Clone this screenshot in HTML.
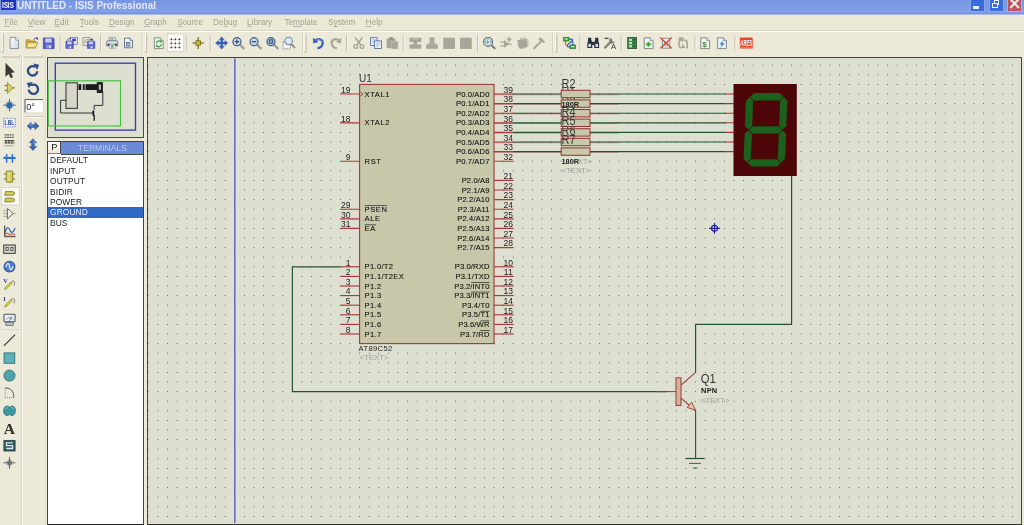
<!DOCTYPE html>
<html><head><meta charset="utf-8"><title>UNTITLED - ISIS Professional</title>
<style>
html,body{margin:0;padding:0;}
body{width:1024px;height:525px;overflow:hidden;background:#ece9d8;position:relative;font-family:"Liberation Sans",sans-serif;}
.abs{position:absolute;}
#title{left:0;top:0;width:1024px;height:15px;border-bottom:1px solid #a8bae0;box-sizing:border-box;background:linear-gradient(#7696e2,#7b9ae4 45%,#86a3e8);}
#title .t{left:17px;top:-1.3px;color:#e2e9fb;font-weight:bold;font-size:10.4px;white-space:nowrap;line-height:14px;transform:scaleX(0.955);transform-origin:0 0;}
#menu{left:0;top:14px;width:1024px;height:16px;}
#menu span{position:absolute;top:3.4px;font-size:8.9px;color:#a3a194;line-height:11px;white-space:nowrap;transform:scaleX(0.92);transform-origin:50% 50%;}
#menu u{text-decoration-thickness:0.7px;text-underline-offset:1px;text-decoration-color:#b5b3a6;}
.tb{top:-1px;width:15.2px;height:13.2px;margin-left:-0.3px;background:#3a6ce0;border:1px solid #8aa6ee;box-sizing:border-box;}
.hl{background:#fff;height:1px;}
.sh{background:#aca899;height:1px;}
.lst{position:absolute;left:49.6px;font-size:9.2px;line-height:10.4px;color:#222;white-space:nowrap;transform:scaleX(0.915);transform-origin:0 0;letter-spacing:0.1px;}
svg text{font-family:"Liberation Sans",sans-serif;}
.pt{stroke:#0c0c0c;stroke-width:0.07px;}
#root{position:absolute;left:0;top:0;width:1024px;height:525px;overflow:hidden;will-change:transform;}
</style></head><body><div id="root">
<div id="title" class="abs"><div class="abs" style="left:1px;top:0;width:14.5px;height:10.4px;background:#2432c2;"></div>
<div class="abs" style="left:1.8px;top:0.2px;font-size:8.8px;line-height:10px;font-weight:bold;color:#f4f6ff;letter-spacing:-0.2px;transform:scaleX(0.74);transform-origin:0 0;">ISIS</div>
<div class="abs t">UNTITLED - ISIS Professional</div>
<div class="abs" style="left:0;top:12px;width:1024px;height:2px;background:linear-gradient(#7f9de6,#7691dc);"></div>
<div class="abs tb" style="left:970px;"></div><div class="abs" style="left:973px;top:6.4px;width:6px;height:2.2px;background:#e8eefc;"></div>
<div class="abs tb" style="left:989px;"></div>
<div class="abs" style="left:994px;top:0.4px;width:5.4px;height:4.6px;border:1.2px solid #e8eefc;border-top-width:1.8px;box-sizing:border-box;"></div>
<div class="abs" style="left:991.8px;top:2.6px;width:6.2px;height:5.2px;border:1.2px solid #f4f7ff;border-top-width:1.8px;box-sizing:border-box;background:#3a6ce0;"></div>
<div class="abs tb" style="left:1007.6px;background:#c2525e;border-color:#d9a0b0;"></div>
<svg class="abs" style="left:1008px;top:0" width="14" height="12" viewBox="0 0 14 12"><path d="M2.2 -1 L11 8 M11 -1 L2.2 8" stroke="#fbeef0" stroke-width="1.9" fill="none"/></svg>
</div>
<div id="menu" class="abs">
<span style="left:4px"><u>F</u>ile</span><span style="left:26.5px"><u>V</u>iew</span><span style="left:54px"><u>E</u>dit</span><span style="left:78.5px"><u>T</u>ools</span><span style="left:107.5px"><u>D</u>esign</span><span style="left:143px"><u>G</u>raph</span><span style="left:175.5px"><u>S</u>ource</span><span style="left:211.5px">De<u>b</u>ug</span><span style="left:245.5px"><u>L</u>ibrary</span><span style="left:282.5px">Te<u>m</u>plate</span><span style="left:327px">S<u>y</u>stem</span><span style="left:364.5px"><u>H</u>elp</span>
</div>
<div class="abs sh" style="left:0;top:30px;width:1024px;opacity:.3"></div>
<div class="abs hl" style="left:0;top:31px;width:1024px;"></div>
<svg class="abs" style="left:0;top:0" width="1024" height="58" viewBox="0 0 1024 58">
<rect x="167.2" y="34" width="16.6" height="17.4" fill="#fbfaf4" stroke="#c9c6b6" stroke-width="0.6"/>
<line x1="60.2" y1="35" x2="60.2" y2="51.5" stroke="#bcb9a9" stroke-width="1"/><line x1="61.1" y1="35" x2="61.1" y2="51.5" stroke="#faf9f2" stroke-width="0.8"/>
<line x1="100.5" y1="35" x2="100.5" y2="51.5" stroke="#bcb9a9" stroke-width="1"/><line x1="101.4" y1="35" x2="101.4" y2="51.5" stroke="#faf9f2" stroke-width="0.8"/>
<line x1="186.9" y1="35" x2="186.9" y2="51.5" stroke="#bcb9a9" stroke-width="1"/><line x1="187.8" y1="35" x2="187.8" y2="51.5" stroke="#faf9f2" stroke-width="0.8"/>
<line x1="210.3" y1="35" x2="210.3" y2="51.5" stroke="#bcb9a9" stroke-width="1"/><line x1="211.20000000000002" y1="35" x2="211.20000000000002" y2="51.5" stroke="#faf9f2" stroke-width="0.8"/>
<line x1="346.6" y1="35" x2="346.6" y2="51.5" stroke="#bcb9a9" stroke-width="1"/><line x1="347.5" y1="35" x2="347.5" y2="51.5" stroke="#faf9f2" stroke-width="0.8"/>
<line x1="403.3" y1="35" x2="403.3" y2="51.5" stroke="#bcb9a9" stroke-width="1"/><line x1="404.2" y1="35" x2="404.2" y2="51.5" stroke="#faf9f2" stroke-width="0.8"/>
<line x1="477.5" y1="35" x2="477.5" y2="51.5" stroke="#bcb9a9" stroke-width="1"/><line x1="478.4" y1="35" x2="478.4" y2="51.5" stroke="#faf9f2" stroke-width="0.8"/>
<line x1="580.0" y1="35" x2="580.0" y2="51.5" stroke="#bcb9a9" stroke-width="1"/><line x1="580.9" y1="35" x2="580.9" y2="51.5" stroke="#faf9f2" stroke-width="0.8"/>
<line x1="621.3" y1="35" x2="621.3" y2="51.5" stroke="#bcb9a9" stroke-width="1"/><line x1="622.1999999999999" y1="35" x2="622.1999999999999" y2="51.5" stroke="#faf9f2" stroke-width="0.8"/>
<line x1="695.0" y1="35" x2="695.0" y2="51.5" stroke="#bcb9a9" stroke-width="1"/><line x1="695.9" y1="35" x2="695.9" y2="51.5" stroke="#faf9f2" stroke-width="0.8"/>
<line x1="735.0" y1="35" x2="735.0" y2="51.5" stroke="#bcb9a9" stroke-width="1"/><line x1="735.9" y1="35" x2="735.9" y2="51.5" stroke="#faf9f2" stroke-width="0.8"/>
<path d="M2.4 33.6 V52" stroke="#fbfaf4" stroke-width="1" fill="none"/><path d="M3.4 33.6 V52.2 H1.4" stroke="#b5b2a2" stroke-width="0.9" fill="none"/>
<path d="M145.70000000000002 33.6 V52" stroke="#fbfaf4" stroke-width="1" fill="none"/><path d="M146.70000000000002 33.6 V52.2 H144.70000000000002" stroke="#b5b2a2" stroke-width="0.9" fill="none"/>
<path d="M305.0 33.6 V52" stroke="#fbfaf4" stroke-width="1" fill="none"/><path d="M306.0 33.6 V52.2 H304.0" stroke="#b5b2a2" stroke-width="0.9" fill="none"/>
<path d="M555.8 33.6 V52" stroke="#fbfaf4" stroke-width="1" fill="none"/><path d="M556.8 33.6 V52.2 H554.8" stroke="#b5b2a2" stroke-width="0.9" fill="none"/>
<line x1="142.2" y1="32" x2="142.2" y2="54.5" stroke="#d4d1c1" stroke-width="1"/><line x1="143.1" y1="32" x2="143.1" y2="54.5" stroke="#f8f7ef" stroke-width="0.8"/>
<line x1="302.5" y1="32" x2="302.5" y2="54.5" stroke="#d4d1c1" stroke-width="1"/><line x1="303.4" y1="32" x2="303.4" y2="54.5" stroke="#f8f7ef" stroke-width="0.8"/>
<line x1="552.5" y1="32" x2="552.5" y2="54.5" stroke="#d4d1c1" stroke-width="1"/><line x1="553.4" y1="32" x2="553.4" y2="54.5" stroke="#f8f7ef" stroke-width="0.8"/>
<g transform="translate(8.10,36.6) scale(0.8)"><defs><linearGradient id="pg" x1="0" y1="0" x2="1" y2="1"><stop offset="0" stop-color="#ffffff"/><stop offset="1" stop-color="#cfd6e2"/></linearGradient></defs><path d="M2.5 1 H9.5 L13 4.5 V15 H2.5 Z" fill="url(#pg)" stroke="#7b8694" stroke-width="1.1"/><path d="M9.5 1 V4.5 H13" fill="#e8ecf3" stroke="#7b8694" stroke-width="0.9"/></g>
<g transform="translate(25.40,36.6) scale(0.8)"><path d="M1 4 H5.5 L7 5.5 H12.5 V8 H1 Z" fill="#e9c85a" stroke="#9c7f22" stroke-width="0.9"/><path d="M1 14 V6 H12.5 V14 Z" fill="#e9c85a" stroke="#9c7f22" stroke-width="0.9"/><path d="M0.8 14 L3.6 7.6 H15.6 L12.6 14 Z" fill="#f6e58f" stroke="#9c7f22" stroke-width="0.9"/><path d="M10.5 4 C11 1.5 13.5 1 15 2.2" fill="none" stroke="#3b4a9c" stroke-width="1.2"/><path d="M15.8 0.4 L15.8 3.8 L12.8 3 Z" fill="#3b4a9c"/></g>
<g transform="translate(42.40,36.6) scale(0.8)"><g transform="translate(1.2,1.6) scale(1.12)"><path d="M0 0 H11 L12 1 V12 H0 Z" fill="#565fc6" stroke="#3d45a8" stroke-width="0.8"/><rect x="2.2" y="0.6" width="7" height="4.6" fill="#c9cdf2"/><rect x="3" y="7.6" width="6" height="4.2" fill="#8a90dc"/><rect x="6.6" y="8.4" width="1.6" height="2.8" fill="#f0f0ff"/></g></g>
<g transform="translate(65.40,36.6) scale(0.8)"><rect x="6.5" y="1" width="8.5" height="9" fill="#d9def3" stroke="#6a73b4" stroke-width="0.9"/><rect x="8.6" y="2.6" width="4.4" height="3" fill="#3a3f9a"/><g transform="translate(0.6,5.6) scale(0.78)"><path d="M0 0 H11 L12 1 V12 H0 Z" fill="#565fc6" stroke="#3d45a8" stroke-width="0.8"/><rect x="2.2" y="0.6" width="7" height="4.6" fill="#c9cdf2"/><rect x="3" y="7.6" width="6" height="4.2" fill="#8a90dc"/><rect x="6.6" y="8.4" width="1.6" height="2.8" fill="#f0f0ff"/></g><path d="M3 5 C3 2.5 5 1.6 7 2" fill="none" stroke="#394090" stroke-width="1.1"/></g>
<g transform="translate(82.40,36.6) scale(0.8)"><rect x="0.8" y="1.2" width="8.5" height="10" fill="#e4e3dc" stroke="#8b897c" stroke-width="0.9"/><path d="M3 8 C3 4 6 3 8 4" fill="none" stroke="#8b897c" stroke-width="1"/><g transform="translate(6.2,5.6) scale(0.78)"><path d="M0 0 H11 L12 1 V12 H0 Z" fill="#565fc6" stroke="#3d45a8" stroke-width="0.8"/><rect x="2.2" y="0.6" width="7" height="4.6" fill="#c9cdf2"/><rect x="3" y="7.6" width="6" height="4.2" fill="#8a90dc"/><rect x="6.6" y="8.4" width="1.6" height="2.8" fill="#f0f0ff"/></g><path d="M9.2 3.6 L13 2 L12.6 5.6 Z" fill="#2a2f7a"/></g>
<g transform="translate(105.80,36.6) scale(0.8)"><rect x="4.2" y="0.8" width="7.6" height="5" fill="#f2f4f6" stroke="#7d8894" stroke-width="0.9"/><rect x="6" y="2" width="3.6" height="3" fill="#7cc47c"/><path d="M1 6.6 Q1 5 2.6 5 H13.4 Q15 5 15 6.6 V11.6 H1 Z" fill="#cfd6e0" stroke="#5d6876" stroke-width="0.9"/><rect x="2.2" y="9" width="3" height="2.4" fill="#2e3540"/><rect x="10.8" y="9" width="3" height="2.4" fill="#2e3540"/><rect x="4.4" y="10.2" width="7.2" height="4.6" fill="#f4f6f8" stroke="#8c96a2" stroke-width="0.8"/><rect x="6.4" y="10.4" width="3.2" height="3.6" fill="#63b563"/></g>
<g transform="translate(122.10,36.6) scale(0.8)"><path d="M3 2 H10 L13 5 V14 H3 Z" fill="#f2f4f9" stroke="#4b5d7c" stroke-width="1"/><path d="M10 2 V5 H13" fill="#dfe4ec" stroke="#4b5d7c" stroke-width="0.8"/><rect x="5.2" y="7.4" width="4.6" height="4.6" fill="#a8b4c8" stroke="#55678a" stroke-width="0.9"/></g>
<g transform="translate(152.40,36.6) scale(0.8)"><path d="M2.5 1.5 H10.0 L13.5 5.0 V15.0 H2.5 Z" fill="#eef3ea" stroke="#6d7a70" stroke-width="1"/><path d="M10.0 1.5 V5.0 H13.5" fill="#dfe4ec" stroke="#6d7a70" stroke-width="0.8"/><path d="M5 8.6 A3.2 3.2 0 0 1 10.6 6.4" fill="none" stroke="#3fa04a" stroke-width="1.6"/><path d="M11.8 4.6 L11.4 8 L8.6 6.4 Z" fill="#3fa04a"/><path d="M11 9.4 A3.2 3.2 0 0 1 5.4 11.6" fill="none" stroke="#3fa04a" stroke-width="1.6"/><path d="M4.2 13.4 L4.6 10 L7.4 11.6 Z" fill="#3fa04a"/></g>
<g transform="translate(169.00,36.6) scale(0.8)"><line x1="1" y1="3.5" x2="15" y2="3.5" stroke="#8a8a84" stroke-width="0.8" stroke-dasharray="1 1.2"/><line x1="3" y1="1.5" x2="3" y2="15.5" stroke="#8a8a84" stroke-width="0.8" stroke-dasharray="1 1.2"/><line x1="1" y1="8.5" x2="15" y2="8.5" stroke="#8a8a84" stroke-width="0.8" stroke-dasharray="1 1.2"/><line x1="8" y1="1.5" x2="8" y2="15.5" stroke="#8a8a84" stroke-width="0.8" stroke-dasharray="1 1.2"/><line x1="1" y1="13.5" x2="15" y2="13.5" stroke="#8a8a84" stroke-width="0.8" stroke-dasharray="1 1.2"/><line x1="13" y1="1.5" x2="13" y2="15.5" stroke="#8a8a84" stroke-width="0.8" stroke-dasharray="1 1.2"/><rect x="2.1" y="2.6" width="1.8" height="1.8" fill="#333"/><rect x="2.1" y="7.6" width="1.8" height="1.8" fill="#333"/><rect x="2.1" y="12.6" width="1.8" height="1.8" fill="#333"/><rect x="7.1" y="2.6" width="1.8" height="1.8" fill="#333"/><rect x="7.1" y="7.6" width="1.8" height="1.8" fill="#333"/><rect x="7.1" y="12.6" width="1.8" height="1.8" fill="#333"/><rect x="12.1" y="2.6" width="1.8" height="1.8" fill="#333"/><rect x="12.1" y="7.6" width="1.8" height="1.8" fill="#333"/><rect x="12.1" y="12.6" width="1.8" height="1.8" fill="#333"/></g>
<g transform="translate(191.80,36.6) scale(0.8)"><line x1="1" y1="8" x2="15" y2="8" stroke="#77751a" stroke-width="1.6"/><line x1="8" y1="0.5" x2="8" y2="15.5" stroke="#77751a" stroke-width="1.6"/><rect x="5.2" y="5.2" width="5.6" height="5.6" fill="#bdb94a" stroke="#6a6815" stroke-width="1"/></g>
<g transform="translate(215.30,36.6) scale(0.8)"><g fill="#2f63c4" stroke="#1f4696" stroke-width="0.4"><path d="M8 0.2 L11.2 4 H9.2 V6.8 H12 V4.8 L15.8 8 L12 11.2 V9.2 H9.2 V12 H11.2 L8 15.8 L4.8 12 H6.8 V9.2 H4 V11.2 L0.2 8 L4 4.8 V6.8 H6.8 V4 H4.8 Z"/></g></g>
<g transform="translate(231.90,36.6) scale(0.8)"><line x1="9.6" y1="9.6" x2="14.6" y2="14.6" stroke="#8b8b86" stroke-width="2.6" stroke-linecap="round"/><line x1="9.8" y1="9.8" x2="14.4" y2="14.4" stroke="#b9b9b2" stroke-width="1" stroke-linecap="round"/><circle cx="6.3" cy="6.3" r="5" fill="#c5d6ea" stroke="#3f5f88" stroke-width="1.5"/><path d="M3.6 6.3 H9 M6.3 3.6 V9" stroke="#2c4770" stroke-width="1.5" fill="none"/></g>
<g transform="translate(249.00,36.6) scale(0.8)"><line x1="9.6" y1="9.6" x2="14.6" y2="14.6" stroke="#8b8b86" stroke-width="2.6" stroke-linecap="round"/><line x1="9.8" y1="9.8" x2="14.4" y2="14.4" stroke="#b9b9b2" stroke-width="1" stroke-linecap="round"/><circle cx="6.3" cy="6.3" r="5" fill="#c5d6ea" stroke="#3f5f88" stroke-width="1.5"/><path d="M3.6 6.3 H9" stroke="#2c4770" stroke-width="1.5" fill="none"/></g>
<g transform="translate(265.90,36.6) scale(0.8)"><line x1="9.6" y1="9.6" x2="14.6" y2="14.6" stroke="#8b8b86" stroke-width="2.6" stroke-linecap="round"/><line x1="9.8" y1="9.8" x2="14.4" y2="14.4" stroke="#b9b9b2" stroke-width="1" stroke-linecap="round"/><circle cx="6.3" cy="6.3" r="5" fill="#c5d6ea" stroke="#3f5f88" stroke-width="1.5"/><rect x="4" y="4" width="4.6" height="4.6" fill="#8f9fb6" stroke="#2c4770" stroke-width="1.1"/></g>
<g transform="translate(282.50,36.6) scale(0.8)"><rect x="0.8" y="6.5" width="9" height="8.8" fill="#f4f6f8" stroke="#556" stroke-width="0.9" stroke-dasharray="1.4 1.2"/><line x1="10.6" y1="9" x2="15" y2="13.4" stroke="#8b8b86" stroke-width="2.4" stroke-linecap="round"/><circle cx="7.6" cy="5.6" r="4.7" fill="#dbe6f2" stroke="#6d87a8" stroke-width="1.3"/></g>
<g transform="translate(312.20,36.6) scale(0.8)"><path d="M3.4 5.2 C8 1.2 14 3.6 13 9 C12.4 12 10 14.2 6.6 14.6" fill="none" stroke="#2f63c4" stroke-width="2.8"/><path d="M0.8 1.4 L1.4 8.6 L7.8 6.8 Z" fill="#2f63c4"/><path d="M4.4 4.8 C8 2 12.6 3.8 12 8.4" fill="none" stroke="#6f98e0" stroke-width="0.9"/></g>
<g transform="translate(329.30,36.6) scale(0.8)"><g transform="translate(16,0) scale(-1,1)"><path d="M3.4 5.2 C8 1.2 14 3.6 13 9 C12.4 12 10 14.2 6.6 14.6" fill="none" stroke="#a9a698" stroke-width="2.8"/><path d="M0.8 1.4 L1.4 8.6 L7.8 6.8 Z" fill="#a9a698"/></g></g>
<g transform="translate(352.40,36.6) scale(0.8)"><g stroke="#a9a698" fill="none"><line x1="3.4" y1="1" x2="10.6" y2="10.6" stroke-width="2"/><line x1="12.6" y1="1" x2="5.4" y2="10.6" stroke-width="2"/><circle cx="4" cy="12.4" r="2.3" stroke-width="1.7"/><circle cx="12" cy="12.4" r="2.3" stroke-width="1.7"/></g></g>
<g transform="translate(369.70,36.6) scale(0.8)"><rect x="1.2" y="1.4" width="8" height="9.6" fill="#f2f5fb" stroke="#3f5f9a" stroke-width="1"/><path d="M2.8 4 H7.6 M2.8 6 H7.6 M2.8 8 H6" stroke="#8aa0c8" stroke-width="0.8"/><rect x="6.2" y="5.4" width="8.6" height="9.4" fill="#f2f5fb" stroke="#3f5f9a" stroke-width="1"/><path d="M8 8 H13 M8 10 H13 M8 12 H11.6" stroke="#8aa0c8" stroke-width="0.8"/></g>
<g transform="translate(385.90,36.6) scale(0.8)"><rect x="1" y="2.4" width="11" height="12" fill="#a9a698"/><rect x="4" y="0.8" width="5" height="3" fill="#8f8c80"/><rect x="6.6" y="6" width="8.6" height="9.4" fill="#a9a698" stroke="#c9c6b8" stroke-width="0.7"/></g>
<g transform="translate(409.00,36.6) scale(0.8)"><rect x="0.6" y="1.4" width="14.8" height="5.4" fill="#a9a698"/><rect x="0.6" y="9.8" width="14.8" height="5.4" fill="#a9a698"/><rect x="5.6" y="6.4" width="4.8" height="4" fill="#a9a698"/><rect x="4.6" y="2.4" width="6.6" height="1.4" fill="#c2bfb1"/></g>
<g transform="translate(425.60,36.6) scale(0.8)"><rect x="0.6" y="9.6" width="14.8" height="5.6" fill="#a9a698"/><rect x="4.8" y="1" width="6.4" height="4.6" fill="#a9a698"/><path d="M8 4 L13.6 10 H2.4 Z" fill="#a9a698"/></g>
<g transform="translate(442.60,36.6) scale(0.8)"><rect x="0.8" y="1.4" width="14.6" height="14" fill="#a9a698"/></g>
<g transform="translate(459.40,36.6) scale(0.8)"><rect x="0.8" y="1.4" width="14.6" height="14" fill="#a9a698"/></g>
<g transform="translate(482.80,36.6) scale(0.8)"><line x1="10" y1="10" x2="14.8" y2="14.8" stroke="#6e7478" stroke-width="2.4" stroke-linecap="round"/><circle cx="6.6" cy="6.6" r="5.6" fill="#dfe9ee" stroke="#4d6a72" stroke-width="1.3"/><circle cx="6.6" cy="6.6" r="3.3" fill="#f4f7f8" stroke="#7a9aa0" stroke-width="0.8"/><path d="M1.6 6.6 H4 M9.2 6.6 H11.6 M5.4 5 L8 6.6 L5.4 8.2 Z" stroke="#5c7c84" stroke-width="0.8" fill="#9fb9bf"/></g>
<g transform="translate(499.60,36.6) scale(0.8)"><path d="M1 7 H6 M1 11.6 H6 M11 9.4 H15" stroke="#a9a698" stroke-width="1.6"/><path d="M5.6 4.4 L12 9.4 L5.6 14.4 Z" fill="#a9a698"/><path d="M9 3.6 H15 M12 0.6 V6.6" stroke="#a9a698" stroke-width="1.8"/></g>
<g transform="translate(516.60,36.6) scale(0.8)"><rect x="2" y="3.4" width="11" height="10.6" fill="#a9a698" transform="rotate(-8 8 8)"/><path d="M1 5 H3 M1 8 H3 M1 11 H3 M12.6 4 H15 M12.6 7 H15 M12.6 10 H15 M5 1.6 V3.6 M8 1.2 V3.4 M11 1 V3 M5 13.8 V15.6 M8 13.6 V15.4" stroke="#a9a698" stroke-width="1.5"/></g>
<g transform="translate(532.90,36.6) scale(0.8)"><line x1="1.6" y1="14.6" x2="10.4" y2="5.6" stroke="#a9a698" stroke-width="2.4" stroke-linecap="round"/><path d="M7 2.6 L9.6 0.8 L15.4 6.6 L13.4 8 L11.6 6.4 L9.8 7.8 Z" fill="#a9a698"/></g>
<g transform="translate(563.00,36.6) scale(0.8)"><rect x="0.6" y="1" width="7" height="4.6" fill="#3da43d" stroke="#1f6e25" stroke-width="0.7"/><rect x="2" y="2.3" width="4" height="1.6" fill="#bfe8b8"/><rect x="8.6" y="10.4" width="7" height="4.8" fill="#3da43d" stroke="#1f6e25" stroke-width="0.7"/><rect x="10" y="11.8" width="4" height="1.6" fill="#bfe8b8"/><path d="M7.6 3.2 H10.4 Q12.6 3.2 11.6 5.2 L6 10 Q4.4 12.6 7 12.8 H8.6" fill="none" stroke="#2f57c2" stroke-width="1.5"/><path d="M3.2 5.6 V9 Q3.2 11.4 5.4 10.6" fill="none" stroke="#d0702c" stroke-width="1.5"/><path d="M12.4 10.4 V7.6 Q12.4 5.4 10.6 6.2" fill="none" stroke="#2f57c2" stroke-width="1.4"/></g>
<g transform="translate(586.80,36.6) scale(0.8)"><g fill="#27323f"><rect x="1.6" y="1.4" width="4" height="4"/><rect x="10.4" y="1.4" width="4" height="4"/><path d="M0.6 14.4 V8.6 L2 4.4 H5.6 L6.8 8 V14.4 Z"/><path d="M9.2 14.4 V8 L10.4 4.4 H14 L15.4 8.6 V14.4 Z"/><rect x="6.4" y="6.4" width="3.2" height="4.2"/></g><rect x="2" y="9" width="3.2" height="4" fill="#cfd9e6"/><rect x="10.8" y="9" width="3.2" height="4" fill="#cfd9e6"/></g>
<g transform="translate(603.80,36.6) scale(0.8)"><line x1="1.6" y1="13.6" x2="9.4" y2="5.8" stroke="#5a5a54" stroke-width="2.6" stroke-linecap="round"/><line x1="1.8" y1="13.4" x2="9.2" y2="6" stroke="#c4c4bc" stroke-width="1.1" stroke-linecap="round"/><path d="M8.6 2.2 A3.3 3.3 0 1 0 13.2 6.8 L11.2 6.8 L9.8 5.2 L10 3.2 Z" fill="#8a8a84" stroke="#55554f" stroke-width="0.6"/><path d="M1 2.2 H6" stroke="#333" stroke-width="1.4"/><text x="9" y="16" font-size="9.4" fill="#333">A</text></g>
<g transform="translate(625.80,36.6) scale(0.8)"><rect x="2.4" y="1" width="11" height="14" fill="#3f8a4a" stroke="#2a4f30" stroke-width="1"/><rect x="4.2" y="2.8" width="3.4" height="2.6" fill="#cfe9cf"/><rect x="4.2" y="6.8" width="3.4" height="2.6" fill="#cfe9cf"/><rect x="4.2" y="10.8" width="3.4" height="2.6" fill="#cfe9cf"/><path d="M8.6 4 H12 M8.6 8 H12 M8.6 12 H12" stroke="#1d3b22" stroke-width="1.1"/></g>
<g transform="translate(642.20,36.6) scale(0.8)"><path d="M2.5 1.5 H10.0 L13.5 5.0 V15.0 H2.5 Z" fill="#f2f6f0" stroke="#5f6f66" stroke-width="1"/><path d="M10.0 1.5 V5.0 H13.5" fill="#dfe4ec" stroke="#5f6f66" stroke-width="0.8"/><path d="M4.6 9.6 H11 M7.8 6.4 V12.8" stroke="#2ea338" stroke-width="2.2"/></g>
<g transform="translate(659.60,36.6) scale(0.8)"><rect x="3.4" y="2" width="9.4" height="12.4" fill="#e9ece6" stroke="#66736b" stroke-width="0.9"/><rect x="5.6" y="6.4" width="5" height="5" fill="#9aa89e"/><path d="M0.8 1.2 L15.2 15 M15.2 1.2 L0.8 15" stroke="#d1503c" stroke-width="1.7"/></g>
<g transform="translate(676.50,36.6) scale(0.8)"><rect x="2.6" y="0.8" width="6" height="4.6" fill="#a9a698"/><path d="M4 5 C2 9 2.6 12 5.4 14.6" fill="none" stroke="#a9a698" stroke-width="2"/><path d="M9.6 4.4 C13.6 4.4 14 8 13 14.6" fill="none" stroke="#a9a698" stroke-width="2.2"/><path d="M8.4 2 V7 L5.4 4.6 Z" fill="#a9a698"/><path d="M7.4 9 L11 14 L6 15 Z" fill="#a9a698"/></g>
<g transform="translate(698.80,36.6) scale(0.8)"><path d="M2.5 1.5 H10.0 L13.5 5.0 V15.0 H2.5 Z" fill="#eef1ea" stroke="#6a746e" stroke-width="1"/><path d="M10.0 1.5 V5.0 H13.5" fill="#dfe4ec" stroke="#6a746e" stroke-width="0.8"/><text x="4.6" y="13" font-size="9.6" font-weight="bold" fill="#3a8f3a">$</text></g>
<g transform="translate(715.60,36.6) scale(0.8)"><path d="M2.5 1.5 H10.0 L13.5 5.0 V15.0 H2.5 Z" fill="#edf2f8" stroke="#66727f" stroke-width="1"/><path d="M10.0 1.5 V5.0 H13.5" fill="#dfe4ec" stroke="#66727f" stroke-width="0.8"/><path d="M9.4 5 L5 10 H8 L6 14.4 L11.4 8.4 H8.2 Z" fill="#2f7ad8"/></g>
<g transform="translate(739.90,36.6) scale(0.8)"><rect x="0" y="1.2" width="16" height="13.6" fill="#e2492f"/><rect x="0" y="13" width="16" height="2" fill="#f08a5a" opacity="0.7"/><text x="8" y="12.2" font-size="11.4" font-weight="bold" fill="#fff" text-anchor="middle" textLength="14.8" lengthAdjust="spacingAndGlyphs">ARES</text></g>
</svg>
<svg class="abs" style="left:0;top:54px" width="47" height="471" viewBox="0 54 47 471">
<path d="M1.6 56 H19.6" stroke="#fbfaf4" stroke-width="0.9" fill="none"/><path d="M1.6 57 H19.6 V55.4" stroke="#b5b2a2" stroke-width="0.9" fill="none"/>
<path d="M24.6 56 H42.6" stroke="#fbfaf4" stroke-width="0.9" fill="none"/><path d="M24.6 57 H42.6 V55.4" stroke="#b5b2a2" stroke-width="0.9" fill="none"/>
<line x1="21.6" y1="55" x2="21.6" y2="525" stroke="#d8d5c6" stroke-width="1"/><line x1="22.5" y1="55" x2="22.5" y2="525" stroke="#faf9f2" stroke-width="0.9"/>
<line x1="45.2" y1="55" x2="45.2" y2="525" stroke="#e0ddcf" stroke-width="1"/>
<rect x="1.2" y="187.4" width="18" height="17.6" fill="#fbfaf4" stroke="#c9c6b6" stroke-width="0.6"/>
<line x1="1.6" y1="330" x2="19.6" y2="330" stroke="#c4c1b2" stroke-width="0.9"/><line x1="1.6" y1="330.9" x2="19.6" y2="330.9" stroke="#faf9f2" stroke-width="0.8"/>
<g transform="translate(3.1,64.00) scale(0.8)"><path transform="translate(-1.2,-1.4) scale(1.16,1.2)" d="M4 0.6 V14 L7 11 L9.4 15.6 L11.4 14.6 L9.2 10.2 L13 9.6 Z" fill="#3c3a34" stroke="#2a2924" stroke-width="0.6"/></g>
<g transform="translate(3.1,81.60) scale(0.8)"><g transform="translate(1.4,-1) scale(0.86,1.12)"><path d="M0.6 5.4 H5 M0.6 10.6 H5 M12 8 H15.6" stroke="#8a8424" stroke-width="1.4"/><path d="M4.6 2 L12.6 8 L4.6 14 Z" fill="#d8d268" stroke="#8a8424" stroke-width="1.1"/></g></g>
<g transform="translate(3.1,98.80) scale(0.8)"><path d="M0.4 8 H15.6 M8 0.4 V15.6" stroke="#2c5f96" stroke-width="1.2"/><circle cx="8" cy="8" r="3.6" fill="#2c5f96"/><circle cx="8" cy="8" r="5.2" fill="#3c78b8" opacity="0.35"/></g>
<g transform="translate(3.1,116.20) scale(0.8)"><rect x="0.6" y="2.6" width="14.8" height="10.8" fill="#eef2fa" stroke="#3560b0" stroke-width="0.9" stroke-dasharray="1.2 1"/><text x="8" y="11.6" font-size="8.6" font-weight="bold" fill="#2c55a8" text-anchor="middle" textLength="12.4" lengthAdjust="spacingAndGlyphs">LBL</text></g>
<g transform="translate(3.1,133.80) scale(0.8)"><g transform="translate(0,-1.6) scale(1,1.22)"><path d="M2 2.4 H14 M2 5 H14" stroke="#55544c" stroke-width="1.2" stroke-dasharray="2.2 0.8"/><path d="M2 8.4 H14 M2 10.6 H14" stroke="#33322c" stroke-width="1.5" stroke-dasharray="3 0.6"/><path d="M2 13.6 H14" stroke="#77766c" stroke-width="1" stroke-dasharray="2 1"/></g></g>
<g transform="translate(3.1,152.00) scale(0.8)"><path d="M0.4 7.4 H15.6" stroke="#2a6fd0" stroke-width="2.6"/><path d="M4.4 2.4 V13.4 M11.6 2.4 V13.4" stroke="#2a6fd0" stroke-width="1.8"/></g>
<g transform="translate(3.1,170.20) scale(0.8)"><path d="M1 4.8 H4 M1 11 H4 M12 4.8 H15 M12 11 H15" stroke="#7d781f" stroke-width="1.3"/><rect x="4" y="1" width="8" height="14" rx="1" fill="#d2cc62" stroke="#7d781f" stroke-width="1.1"/><rect x="5.4" y="2.4" width="2.4" height="11" fill="#e8e396" opacity="0.8"/></g>
<g transform="translate(3.1,190.20) scale(0.8)"><path d="M3 1.6 H11 Q14.4 1.6 14.4 4 Q14.4 6.4 11 6.4 H2 Z" fill="#cfc85c" stroke="#7d781f" stroke-width="1"/><path d="M3 9.8 H11 Q14.4 9.8 14.4 12.2 Q14.4 14.6 11 14.6 H2 Z" fill="#cfc85c" stroke="#7d781f" stroke-width="1"/></g>
<g transform="translate(3.1,207.20) scale(0.8)"><path d="M0.6 4.6 H5.4 M0.6 8 H5.4 M0.6 11.4 H5.4" stroke="#5c5c54" stroke-width="1" stroke-dasharray="1.4 1"/><path d="M5.4 1.6 L12.6 8 L5.4 14.4 Z" fill="#f4f3ea" stroke="#55554d" stroke-width="1.1"/><path d="M12.6 8 H15.6" stroke="#55554d" stroke-width="1" stroke-dasharray="1.2 0.8"/></g>
<g transform="translate(3.1,225.00) scale(0.8)"><path d="M2 0.6 V14 H15.6" stroke="#3a3932" stroke-width="1.3" fill="none"/><path d="M2.6 9.6 C4 2 7 2 8.6 6.6 C10 10.6 13 10 15 3.6" fill="none" stroke="#2b66b8" stroke-width="1.5"/><path d="M2.6 11.4 C5 8 7 13 9.6 11.4 C12 10 13 12 15 11.6" fill="none" stroke="#c64632" stroke-width="1.3"/><path d="M2 15.4 H15" stroke="#c64632" stroke-width="0.9" stroke-dasharray="1.4 1.4"/></g>
<g transform="translate(3.1,242.60) scale(0.8)"><rect x="0.8" y="3" width="14.4" height="10.4" fill="#d7d7d2" stroke="#3f3f3a" stroke-width="1.3"/><rect x="3" y="5.4" width="4" height="5" fill="#55554f"/><rect x="9" y="5.4" width="4" height="5" fill="#55554f"/><rect x="4.2" y="6.6" width="1.6" height="2.6" fill="#e8e8e2"/><rect x="10.2" y="6.6" width="1.6" height="2.6" fill="#e8e8e2"/></g>
<g transform="translate(3.1,260.20) scale(0.8)"><circle cx="8" cy="8" r="6.8" fill="#4f7fd0" stroke="#2d4f95" stroke-width="1.3"/><path d="M3.6 8.6 C5 2.6 7.4 3 8 8 C8.6 13 11 13.4 12.4 7.4" fill="none" stroke="#eef3ff" stroke-width="1.4"/></g>
<g transform="translate(3.1,277.80) scale(0.8)"><text x="0.2" y="7" font-size="7.6" font-weight="bold" fill="#26358c" style="font-family:'Liberation Serif',serif">V</text><path d="M1.6 15 L4 12.6" stroke="#444" stroke-width="1"/><path d="M3.4 13 L10 6.4" stroke="#a9ac2c" stroke-width="3.2" stroke-linecap="round"/><path d="M4 12.4 L9.6 6.8" stroke="#e6e86e" stroke-width="1.2"/><path d="M10.4 6 C12 3 14.6 3.4 14.4 6.4 C14.3 8 13.4 8.6 13.6 10" fill="none" stroke="#6f6f78" stroke-width="1.1"/></g>
<g transform="translate(3.1,295.40) scale(0.8)"><text x="0.2" y="7" font-size="7.6" font-weight="bold" fill="#26358c" style="font-family:'Liberation Serif',serif">I</text><path d="M1.6 15 L4 12.6" stroke="#444" stroke-width="1"/><path d="M3.4 13 L10 6.4" stroke="#a9ac2c" stroke-width="3.2" stroke-linecap="round"/><path d="M4 12.4 L9.6 6.8" stroke="#e6e86e" stroke-width="1.2"/><path d="M10.4 6 C12 3 14.6 3.4 14.4 6.4 C14.3 8 13.4 8.6 13.6 10" fill="none" stroke="#6f6f78" stroke-width="1.1"/></g>
<g transform="translate(3.1,313.20) scale(0.8)"><rect x="1" y="1.2" width="14" height="9.6" rx="1" fill="#e9eef4" stroke="#4c5866" stroke-width="1.3"/><path d="M3.4 8.4 Q8 2 12.6 8.4" fill="none" stroke="#7a8794" stroke-width="0.9"/><path d="M8 9.4 L10.6 4.2" stroke="#3a4550" stroke-width="0.9"/><rect x="3.4" y="11.4" width="9.2" height="3.8" fill="#b9bfc6" stroke="#5d6670" stroke-width="0.9"/></g>
<g transform="translate(3.1,333.80) scale(0.8)"><path d="M1 15 L15 1" stroke="#3f3e38" stroke-width="1.5"/></g>
<g transform="translate(3.1,351.60) scale(0.8)"><rect x="1.2" y="1.6" width="13.4" height="13" fill="#5fb0b8" stroke="#2f7078" stroke-width="1.1"/></g>
<g transform="translate(3.1,369.20) scale(0.8)"><circle cx="8" cy="8" r="6.9" fill="#4da4ac" stroke="#2f7078" stroke-width="1.1"/></g>
<g transform="translate(3.1,386.80) scale(0.8)"><path d="M2.6 1.6 C10 1.4 13.6 6 13.4 13.6" fill="none" stroke="#4b4a44" stroke-width="1.2"/><path d="M2.6 1.6 V13.6 H13.4" fill="none" stroke="#4a6fd0" stroke-width="1" stroke-dasharray="1.2 1.2"/></g>
<g transform="translate(3.1,404.40) scale(0.8)"><path d="M5.2 2 C7 2 7.6 3.2 8 3.6 C8.4 3.2 9.2 2 11 2 C14 2 15.6 4.6 15.4 8 C15.4 11.4 13.6 14 11 14 C9.2 14 8.4 12.8 8 12.4 C7.6 12.8 7 14 5.2 14 C2.4 14 0.6 11.4 0.6 8 C0.6 4.6 2.4 2 5.2 2 Z" fill="#3d98a0" stroke="#2a6a72" stroke-width="0.9"/><path d="M3 6 C3.4 4.4 4.6 3.8 5.8 4 M10 4 C11.6 3.8 12.8 4.6 13.2 6" fill="none" stroke="#9fd3d8" stroke-width="1"/></g>
<g transform="translate(3.1,421.80) scale(0.8)"><text x="8" y="15" font-size="19.5" font-weight="bold" fill="#33312c" text-anchor="middle" style="font-family:'Liberation Serif',serif">A</text></g>
<g transform="translate(3.1,439.20) scale(0.8)"><rect x="1" y="1.4" width="14" height="13.4" fill="#2f5a60" stroke="#1d3a3e" stroke-width="0.9"/><path d="M12 4.6 H4.2 V8 H11.8 V11.6 H4" fill="none" stroke="#dbe8ea" stroke-width="1.7"/></g>
<g transform="translate(3.1,456.40) scale(0.8)"><path d="M0.6 8 H15.4 M8 0.6 V15.4" stroke="#4e5a5e" stroke-width="1.1"/><rect x="5.4" y="5.4" width="5.2" height="5.2" fill="#5d6c70" opacity="0.85"/><path d="M3.4 6.6 H12.6 M3.4 9.4 H12.6 M6.6 3.4 V12.6 M9.4 3.4 V12.6" stroke="#6a787c" stroke-width="0.6"/></g>
<g transform="translate(26.6,63.80) scale(0.8)"><g transform="translate(-1.4,-1.2) scale(1.17)"><path d="M12.6 9 A5 5 0 1 1 10.4 4.4" fill="none" stroke="#2c4a86" stroke-width="2.5"/><path d="M8.4 0.8 L14.6 2 L12.4 7.6 Z" fill="#2c4a86"/></g></g>
<g transform="translate(26.6,82.20) scale(0.8)"><g transform="translate(16,0) scale(-1,1)"><g transform="translate(-1.4,-1.2) scale(1.17)"><path d="M12.6 9 A5 5 0 1 1 10.4 4.4" fill="none" stroke="#2c4a86" stroke-width="2.5"/><path d="M8.4 0.8 L14.6 2 L12.4 7.6 Z" fill="#2c4a86"/></g></g></g>
<g transform="translate(26.6,119.60) scale(0.8)"><path d="M0.6 8 L5.6 3.4 V6.2 H10.4 V3.4 L15.4 8 L10.4 12.6 V9.8 H5.6 V12.6 Z" fill="#3a66b8" stroke="#27488c" stroke-width="0.6"/><path d="M2.4 8 L5 5.6 V7 H8" fill="none" stroke="#8eb0e8" stroke-width="0.8"/></g>
<g transform="translate(26.6,138.20) scale(0.8)"><g transform="rotate(90 8 8)"><path d="M0.6 8 L5.6 3.4 V6.2 H10.4 V3.4 L15.4 8 L10.4 12.6 V9.8 H5.6 V12.6 Z" fill="#3a66b8" stroke="#27488c" stroke-width="0.6"/><path d="M2.4 8 L5 5.6 V7 H8" fill="none" stroke="#8eb0e8" stroke-width="0.8"/></g></g>
<rect x="25" y="99.6" width="18" height="13" fill="#fff"/><path d="M25 112.6 V99.6 H43" fill="none" stroke="#55544a" stroke-width="1"/><path d="M25 113 H43.4 V99.6" fill="none" stroke="#d9d6c8" stroke-width="0.8"/>
<text x="26.2" y="109.6" font-size="9" fill="#222" font-family="Liberation Sans,sans-serif">0&#176;</text>
<line x1="25" y1="116.6" x2="43" y2="116.6" stroke="#c4c1b2" stroke-width="0.9"/><line x1="25" y1="117.5" x2="43" y2="117.5" stroke="#faf9f2" stroke-width="0.8"/>
</svg>
<!-- overview -->
<div class="abs" style="left:47px;top:57px;width:97.4px;height:81.2px;background:#dddfd1;border:1.3px solid #4c4c42;box-sizing:border-box;"></div>
<!-- object selector -->
<div class="abs" style="left:47px;top:141px;width:97px;height:384px;background:#fff;border:1px solid #45453d;border-bottom-color:#222;box-sizing:border-box;"></div>
<div class="abs" style="left:48px;top:142px;width:13.4px;height:12px;background:linear-gradient(#fdfdf8,#ebe8da);border-right:1.2px solid #4e4e48;border-bottom:1px solid #8a887c;box-sizing:border-box;"></div>
<div class="abs" style="left:51.3px;top:142.3px;font-size:9.2px;line-height:11px;color:#111;">P</div>
<div class="abs" style="left:61px;top:142px;width:82px;height:12px;background:#6a8ad6;"></div>
<div class="abs" style="left:61px;top:154px;width:82px;height:1px;background:#444;"></div>
<div class="abs" style="left:77.6px;top:142.6px;font-size:9.2px;line-height:11px;color:#bccbef;white-space:nowrap;transform:scaleX(0.93);transform-origin:0 0;">TERMINALS</div>
<div class="abs" style="left:48px;top:207.4px;width:95px;height:10.2px;background:#316ac5;"></div>
<div class="lst" style="top:155.3px">DEFAULT</div>
<div class="lst" style="top:165.7px">INPUT</div>
<div class="lst" style="top:176.1px">OUTPUT</div>
<div class="lst" style="top:186.5px">BIDIR</div>
<div class="lst" style="top:196.9px">POWER</div>
<div class="lst" style="top:207.3px;color:#e8eefc">GROUND</div>
<div class="lst" style="top:217.7px">BUS</div>
<!-- canvas -->
<div class="abs" style="left:147px;top:57px;width:875px;height:468px;background:#dddfd1;border-left:1.4px solid #45453c;border-top:1.3px solid #45453c;border-right:1.4px solid #45453c;border-bottom:1.6px solid #33332c;box-sizing:border-box;"></div>
<svg class="abs" style="left:0;top:0" width="1024" height="525" viewBox="0 0 1024 525">
<defs>
<pattern id="grid" x="148" y="58" width="48" height="48" patternUnits="userSpaceOnUse">
<g fill="#222"><rect x="0.0" y="6.8" width="0.8" height="0.8"/><rect x="0.0" y="16.4" width="0.8" height="0.8"/><rect x="0.0" y="26.0" width="0.8" height="0.8"/><rect x="0.0" y="35.6" width="0.8" height="0.8"/><rect x="0.0" y="45.2" width="0.8" height="0.8"/><rect x="9.6" y="6.8" width="0.8" height="0.8"/><rect x="9.6" y="16.4" width="0.8" height="0.8"/><rect x="9.6" y="26.0" width="0.8" height="0.8"/><rect x="9.6" y="35.6" width="0.8" height="0.8"/><rect x="9.6" y="45.2" width="0.8" height="0.8"/><rect x="19.2" y="6.8" width="0.8" height="0.8"/><rect x="19.2" y="16.4" width="0.8" height="0.8"/><rect x="19.2" y="26.0" width="0.8" height="0.8"/><rect x="19.2" y="35.6" width="0.8" height="0.8"/><rect x="19.2" y="45.2" width="0.8" height="0.8"/><rect x="28.8" y="6.8" width="0.8" height="0.8"/><rect x="28.8" y="16.4" width="0.8" height="0.8"/><rect x="28.8" y="26.0" width="0.8" height="0.8"/><rect x="28.8" y="35.6" width="0.8" height="0.8"/><rect x="28.8" y="45.2" width="0.8" height="0.8"/><rect x="38.4" y="6.8" width="0.8" height="0.8"/><rect x="38.4" y="16.4" width="0.8" height="0.8"/><rect x="38.4" y="26.0" width="0.8" height="0.8"/><rect x="38.4" y="35.6" width="0.8" height="0.8"/><rect x="38.4" y="45.2" width="0.8" height="0.8"/></g>
</pattern>
<clipPath id="cv"><rect x="148.4" y="58.3" width="872.4" height="465"/></clipPath>
</defs>
<rect x="148.4" y="58.3" width="872.4" height="465" fill="url(#grid)"/>
<g clip-path="url(#cv)">
<line x1="234.80" y1="58.00" x2="234.80" y2="523.00" stroke="#6c6ccc" stroke-width="1.6" />
<rect x="359.6" y="84.4" width="134.40" height="259.20" fill="#c7c8aa" stroke="#a23a36" stroke-width="1.1"/>
<text x="359.00" y="82.00" font-size="11.8" fill="#333" text-anchor="start" font-weight="normal" textLength="12.8" lengthAdjust="spacingAndGlyphs">U1</text>
<text x="358.60" y="351.20" font-size="7.6" fill="#1c1c1c" text-anchor="start" font-weight="normal" letter-spacing="0.35">AT89C52</text>
<text x="359.60" y="359.80" font-size="8.0" fill="#a0a19a" text-anchor="start" font-weight="normal" textLength="29" lengthAdjust="spacingAndGlyphs">&lt;TEXT&gt;</text>
<line x1="340.40" y1="94.00" x2="359.60" y2="94.00" stroke="#ae3a38" stroke-width="1.15" />
<text x="350.40" y="92.70" font-size="8.5" fill="#222" text-anchor="end" font-weight="normal" >19</text>
<text x="364.60" y="96.50" font-size="7.6" fill="#0c0c0c" text-anchor="start" font-weight="normal" letter-spacing="0.55" class="pt">XTAL1</text>
<line x1="340.40" y1="122.80" x2="359.60" y2="122.80" stroke="#ae3a38" stroke-width="1.15" />
<text x="350.40" y="121.50" font-size="8.5" fill="#222" text-anchor="end" font-weight="normal" >18</text>
<text x="364.60" y="125.30" font-size="7.6" fill="#0c0c0c" text-anchor="start" font-weight="normal" letter-spacing="0.55" class="pt">XTAL2</text>
<line x1="340.40" y1="161.20" x2="359.60" y2="161.20" stroke="#ae3a38" stroke-width="1.15" />
<text x="350.40" y="159.90" font-size="8.5" fill="#222" text-anchor="end" font-weight="normal" >9</text>
<text x="364.60" y="163.70" font-size="7.6" fill="#0c0c0c" text-anchor="start" font-weight="normal" letter-spacing="0.55" class="pt">RST</text>
<line x1="340.40" y1="209.20" x2="359.60" y2="209.20" stroke="#ae3a38" stroke-width="1.15" />
<text x="350.40" y="207.90" font-size="8.5" fill="#222" text-anchor="end" font-weight="normal" >29</text>
<text x="364.60" y="211.70" font-size="7.6" fill="#0c0c0c" text-anchor="start" font-weight="normal" letter-spacing="0.55" class="pt">PSEN</text>
<line x1="364.60" y1="205.60" x2="387.10" y2="205.60" stroke="#333" stroke-width="0.8" />
<line x1="340.40" y1="218.80" x2="359.60" y2="218.80" stroke="#ae3a38" stroke-width="1.15" />
<text x="350.40" y="217.50" font-size="8.5" fill="#222" text-anchor="end" font-weight="normal" >30</text>
<text x="364.60" y="221.30" font-size="7.6" fill="#0c0c0c" text-anchor="start" font-weight="normal" letter-spacing="0.55" class="pt">ALE</text>
<line x1="340.40" y1="228.40" x2="359.60" y2="228.40" stroke="#ae3a38" stroke-width="1.15" />
<text x="350.40" y="227.10" font-size="8.5" fill="#222" text-anchor="end" font-weight="normal" >31</text>
<text x="364.60" y="230.90" font-size="7.6" fill="#0c0c0c" text-anchor="start" font-weight="normal" letter-spacing="0.55" class="pt">EA</text>
<line x1="364.60" y1="224.80" x2="376.10" y2="224.80" stroke="#333" stroke-width="0.8" />
<line x1="340.40" y1="266.80" x2="359.60" y2="266.80" stroke="#ae3a38" stroke-width="1.15" />
<text x="350.40" y="265.50" font-size="8.5" fill="#222" text-anchor="end" font-weight="normal" >1</text>
<text x="364.60" y="269.30" font-size="7.6" fill="#0c0c0c" text-anchor="start" font-weight="normal" letter-spacing="0.3" class="pt">P1.0/T2</text>
<line x1="340.40" y1="276.40" x2="359.60" y2="276.40" stroke="#ae3a38" stroke-width="1.15" />
<text x="350.40" y="275.10" font-size="8.5" fill="#222" text-anchor="end" font-weight="normal" >2</text>
<text x="364.60" y="278.90" font-size="7.6" fill="#0c0c0c" text-anchor="start" font-weight="normal" letter-spacing="0.3" class="pt">P1.1/T2EX</text>
<line x1="340.40" y1="286.00" x2="359.60" y2="286.00" stroke="#ae3a38" stroke-width="1.15" />
<text x="350.40" y="284.70" font-size="8.5" fill="#222" text-anchor="end" font-weight="normal" >3</text>
<text x="364.60" y="288.50" font-size="7.6" fill="#0c0c0c" text-anchor="start" font-weight="normal" letter-spacing="0.3" class="pt">P1.2</text>
<line x1="340.40" y1="295.60" x2="359.60" y2="295.60" stroke="#ae3a38" stroke-width="1.15" />
<text x="350.40" y="294.30" font-size="8.5" fill="#222" text-anchor="end" font-weight="normal" >4</text>
<text x="364.60" y="298.10" font-size="7.6" fill="#0c0c0c" text-anchor="start" font-weight="normal" letter-spacing="0.3" class="pt">P1.3</text>
<line x1="340.40" y1="305.20" x2="359.60" y2="305.20" stroke="#ae3a38" stroke-width="1.15" />
<text x="350.40" y="303.90" font-size="8.5" fill="#222" text-anchor="end" font-weight="normal" >5</text>
<text x="364.60" y="307.70" font-size="7.6" fill="#0c0c0c" text-anchor="start" font-weight="normal" letter-spacing="0.3" class="pt">P1.4</text>
<line x1="340.40" y1="314.80" x2="359.60" y2="314.80" stroke="#ae3a38" stroke-width="1.15" />
<text x="350.40" y="313.50" font-size="8.5" fill="#222" text-anchor="end" font-weight="normal" >6</text>
<text x="364.60" y="317.30" font-size="7.6" fill="#0c0c0c" text-anchor="start" font-weight="normal" letter-spacing="0.3" class="pt">P1.5</text>
<line x1="340.40" y1="324.40" x2="359.60" y2="324.40" stroke="#ae3a38" stroke-width="1.15" />
<text x="350.40" y="323.10" font-size="8.5" fill="#222" text-anchor="end" font-weight="normal" >7</text>
<text x="364.60" y="326.90" font-size="7.6" fill="#0c0c0c" text-anchor="start" font-weight="normal" letter-spacing="0.3" class="pt">P1.6</text>
<line x1="340.40" y1="334.00" x2="359.60" y2="334.00" stroke="#ae3a38" stroke-width="1.15" />
<text x="350.40" y="332.70" font-size="8.5" fill="#222" text-anchor="end" font-weight="normal" >8</text>
<text x="364.60" y="336.50" font-size="7.6" fill="#0c0c0c" text-anchor="start" font-weight="normal" letter-spacing="0.3" class="pt">P1.7</text>
<path d="M359.6 91.5 L363.1 94.0 L359.6 96.5" fill="none" stroke="#a23a36" stroke-width="0.8"/>
<line x1="494.00" y1="94.00" x2="513.20" y2="94.00" stroke="#ae3a38" stroke-width="1.15" />
<text x="508.20" y="92.70" font-size="8.5" fill="#222" text-anchor="middle" font-weight="normal" >39</text>
<text x="489.50" y="96.50" font-size="7.6" fill="#0c0c0c" text-anchor="end" font-weight="normal" letter-spacing="0.12" class="pt">P0.0/AD0</text>
<line x1="494.00" y1="103.60" x2="513.20" y2="103.60" stroke="#ae3a38" stroke-width="1.15" />
<text x="508.20" y="102.30" font-size="8.5" fill="#222" text-anchor="middle" font-weight="normal" >38</text>
<text x="489.50" y="106.10" font-size="7.6" fill="#0c0c0c" text-anchor="end" font-weight="normal" letter-spacing="0.12" class="pt">P0.1/AD1</text>
<line x1="494.00" y1="113.20" x2="513.20" y2="113.20" stroke="#ae3a38" stroke-width="1.15" />
<text x="508.20" y="111.90" font-size="8.5" fill="#222" text-anchor="middle" font-weight="normal" >37</text>
<text x="489.50" y="115.70" font-size="7.6" fill="#0c0c0c" text-anchor="end" font-weight="normal" letter-spacing="0.12" class="pt">P0.2/AD2</text>
<line x1="494.00" y1="122.80" x2="513.20" y2="122.80" stroke="#ae3a38" stroke-width="1.15" />
<text x="508.20" y="121.50" font-size="8.5" fill="#222" text-anchor="middle" font-weight="normal" >36</text>
<text x="489.50" y="125.30" font-size="7.6" fill="#0c0c0c" text-anchor="end" font-weight="normal" letter-spacing="0.12" class="pt">P0.3/AD3</text>
<line x1="494.00" y1="132.40" x2="513.20" y2="132.40" stroke="#ae3a38" stroke-width="1.15" />
<text x="508.20" y="131.10" font-size="8.5" fill="#222" text-anchor="middle" font-weight="normal" >35</text>
<text x="489.50" y="134.90" font-size="7.6" fill="#0c0c0c" text-anchor="end" font-weight="normal" letter-spacing="0.12" class="pt">P0.4/AD4</text>
<line x1="494.00" y1="142.00" x2="513.20" y2="142.00" stroke="#ae3a38" stroke-width="1.15" />
<text x="508.20" y="140.70" font-size="8.5" fill="#222" text-anchor="middle" font-weight="normal" >34</text>
<text x="489.50" y="144.50" font-size="7.6" fill="#0c0c0c" text-anchor="end" font-weight="normal" letter-spacing="0.12" class="pt">P0.5/AD5</text>
<line x1="494.00" y1="151.60" x2="513.20" y2="151.60" stroke="#ae3a38" stroke-width="1.15" />
<text x="508.20" y="150.30" font-size="8.5" fill="#222" text-anchor="middle" font-weight="normal" >33</text>
<text x="489.50" y="154.10" font-size="7.6" fill="#0c0c0c" text-anchor="end" font-weight="normal" letter-spacing="0.12" class="pt">P0.6/AD6</text>
<line x1="494.00" y1="161.20" x2="513.20" y2="161.20" stroke="#ae3a38" stroke-width="1.15" />
<text x="508.20" y="159.90" font-size="8.5" fill="#222" text-anchor="middle" font-weight="normal" >32</text>
<text x="489.50" y="163.70" font-size="7.6" fill="#0c0c0c" text-anchor="end" font-weight="normal" letter-spacing="0.12" class="pt">P0.7/AD7</text>
<line x1="494.00" y1="180.40" x2="513.20" y2="180.40" stroke="#ae3a38" stroke-width="1.15" />
<text x="508.20" y="179.10" font-size="8.5" fill="#222" text-anchor="middle" font-weight="normal" >21</text>
<text x="489.50" y="182.90" font-size="7.6" fill="#0c0c0c" text-anchor="end" font-weight="normal" letter-spacing="0.12" class="pt">P2.0/A8</text>
<line x1="494.00" y1="190.00" x2="513.20" y2="190.00" stroke="#ae3a38" stroke-width="1.15" />
<text x="508.20" y="188.70" font-size="8.5" fill="#222" text-anchor="middle" font-weight="normal" >22</text>
<text x="489.50" y="192.50" font-size="7.6" fill="#0c0c0c" text-anchor="end" font-weight="normal" letter-spacing="0.12" class="pt">P2.1/A9</text>
<line x1="494.00" y1="199.60" x2="513.20" y2="199.60" stroke="#ae3a38" stroke-width="1.15" />
<text x="508.20" y="198.30" font-size="8.5" fill="#222" text-anchor="middle" font-weight="normal" >23</text>
<text x="489.50" y="202.10" font-size="7.6" fill="#0c0c0c" text-anchor="end" font-weight="normal" letter-spacing="0.12" class="pt">P2.2/A10</text>
<line x1="494.00" y1="209.20" x2="513.20" y2="209.20" stroke="#ae3a38" stroke-width="1.15" />
<text x="508.20" y="207.90" font-size="8.5" fill="#222" text-anchor="middle" font-weight="normal" >24</text>
<text x="489.50" y="211.70" font-size="7.6" fill="#0c0c0c" text-anchor="end" font-weight="normal" letter-spacing="0.12" class="pt">P2.3/A11</text>
<line x1="494.00" y1="218.80" x2="513.20" y2="218.80" stroke="#ae3a38" stroke-width="1.15" />
<text x="508.20" y="217.50" font-size="8.5" fill="#222" text-anchor="middle" font-weight="normal" >25</text>
<text x="489.50" y="221.30" font-size="7.6" fill="#0c0c0c" text-anchor="end" font-weight="normal" letter-spacing="0.12" class="pt">P2.4/A12</text>
<line x1="494.00" y1="228.40" x2="513.20" y2="228.40" stroke="#ae3a38" stroke-width="1.15" />
<text x="508.20" y="227.10" font-size="8.5" fill="#222" text-anchor="middle" font-weight="normal" >26</text>
<text x="489.50" y="230.90" font-size="7.6" fill="#0c0c0c" text-anchor="end" font-weight="normal" letter-spacing="0.12" class="pt">P2.5/A13</text>
<line x1="494.00" y1="238.00" x2="513.20" y2="238.00" stroke="#ae3a38" stroke-width="1.15" />
<text x="508.20" y="236.70" font-size="8.5" fill="#222" text-anchor="middle" font-weight="normal" >27</text>
<text x="489.50" y="240.50" font-size="7.6" fill="#0c0c0c" text-anchor="end" font-weight="normal" letter-spacing="0.12" class="pt">P2.6/A14</text>
<line x1="494.00" y1="247.60" x2="513.20" y2="247.60" stroke="#ae3a38" stroke-width="1.15" />
<text x="508.20" y="246.30" font-size="8.5" fill="#222" text-anchor="middle" font-weight="normal" >28</text>
<text x="489.50" y="250.10" font-size="7.6" fill="#0c0c0c" text-anchor="end" font-weight="normal" letter-spacing="0.12" class="pt">P2.7/A15</text>
<line x1="494.00" y1="266.80" x2="513.20" y2="266.80" stroke="#ae3a38" stroke-width="1.15" />
<text x="508.20" y="265.50" font-size="8.5" fill="#222" text-anchor="middle" font-weight="normal" >10</text>
<text x="489.50" y="269.30" font-size="7.6" fill="#0c0c0c" text-anchor="end" font-weight="normal" letter-spacing="0.12" class="pt">P3.0/RXD</text>
<line x1="494.00" y1="276.40" x2="513.20" y2="276.40" stroke="#ae3a38" stroke-width="1.15" />
<text x="508.20" y="275.10" font-size="8.5" fill="#222" text-anchor="middle" font-weight="normal" >11</text>
<text x="489.50" y="278.90" font-size="7.6" fill="#0c0c0c" text-anchor="end" font-weight="normal" letter-spacing="0.12" class="pt">P3.1/TXD</text>
<line x1="494.00" y1="286.00" x2="513.20" y2="286.00" stroke="#ae3a38" stroke-width="1.15" />
<text x="508.20" y="284.70" font-size="8.5" fill="#222" text-anchor="middle" font-weight="normal" >12</text>
<text x="489.50" y="288.50" font-size="7.6" fill="#0c0c0c" text-anchor="end" font-weight="normal" letter-spacing="0.12" class="pt">P3.2/INT0</text>
<line x1="471.10" y1="282.50" x2="489.50" y2="282.50" stroke="#333" stroke-width="0.8" />
<line x1="494.00" y1="295.60" x2="513.20" y2="295.60" stroke="#ae3a38" stroke-width="1.15" />
<text x="508.20" y="294.30" font-size="8.5" fill="#222" text-anchor="middle" font-weight="normal" >13</text>
<text x="489.50" y="298.10" font-size="7.6" fill="#0c0c0c" text-anchor="end" font-weight="normal" letter-spacing="0.12" class="pt">P3.3/INT1</text>
<line x1="471.10" y1="292.10" x2="489.50" y2="292.10" stroke="#333" stroke-width="0.8" />
<line x1="494.00" y1="305.20" x2="513.20" y2="305.20" stroke="#ae3a38" stroke-width="1.15" />
<text x="508.20" y="303.90" font-size="8.5" fill="#222" text-anchor="middle" font-weight="normal" >14</text>
<text x="489.50" y="307.70" font-size="7.6" fill="#0c0c0c" text-anchor="end" font-weight="normal" letter-spacing="0.12" class="pt">P3.4/T0</text>
<line x1="494.00" y1="314.80" x2="513.20" y2="314.80" stroke="#ae3a38" stroke-width="1.15" />
<text x="508.20" y="313.50" font-size="8.5" fill="#222" text-anchor="middle" font-weight="normal" >15</text>
<text x="489.50" y="317.30" font-size="7.6" fill="#0c0c0c" text-anchor="end" font-weight="normal" letter-spacing="0.12" class="pt">P3.5/T1</text>
<line x1="480.30" y1="311.30" x2="489.50" y2="311.30" stroke="#333" stroke-width="0.8" />
<line x1="494.00" y1="324.40" x2="513.20" y2="324.40" stroke="#ae3a38" stroke-width="1.15" />
<text x="508.20" y="323.10" font-size="8.5" fill="#222" text-anchor="middle" font-weight="normal" >16</text>
<text x="489.50" y="326.90" font-size="7.6" fill="#0c0c0c" text-anchor="end" font-weight="normal" letter-spacing="0.12" class="pt">P3.6/WR</text>
<line x1="480.30" y1="320.90" x2="489.50" y2="320.90" stroke="#333" stroke-width="0.8" />
<line x1="494.00" y1="334.00" x2="513.20" y2="334.00" stroke="#ae3a38" stroke-width="1.15" />
<text x="508.20" y="332.70" font-size="8.5" fill="#222" text-anchor="middle" font-weight="normal" >17</text>
<text x="489.50" y="336.50" font-size="7.6" fill="#0c0c0c" text-anchor="end" font-weight="normal" letter-spacing="0.12" class="pt">P3.7/RD</text>
<line x1="480.30" y1="330.50" x2="489.50" y2="330.50" stroke="#333" stroke-width="0.8" />
<line x1="494.00" y1="94.70" x2="561.20" y2="94.70" stroke="#ae3a38" stroke-width="0.8" opacity="0.6"/>
<line x1="590.00" y1="94.70" x2="618.80" y2="94.70" stroke="#ae3a38" stroke-width="0.8" opacity="0.6"/>
<line x1="513.20" y1="94.00" x2="726.00" y2="94.00" stroke="#27542c" stroke-width="1.15" />
<line x1="725.50" y1="94.00" x2="734.00" y2="94.00" stroke="#a83434" stroke-width="1.1" />
<line x1="494.00" y1="104.30" x2="561.20" y2="104.30" stroke="#ae3a38" stroke-width="0.8" opacity="0.6"/>
<line x1="590.00" y1="104.30" x2="618.80" y2="104.30" stroke="#ae3a38" stroke-width="0.8" opacity="0.6"/>
<line x1="513.20" y1="103.60" x2="726.00" y2="103.60" stroke="#27542c" stroke-width="1.15" />
<line x1="725.50" y1="103.60" x2="734.00" y2="103.60" stroke="#a83434" stroke-width="1.1" />
<line x1="494.00" y1="113.90" x2="561.20" y2="113.90" stroke="#ae3a38" stroke-width="0.8" opacity="0.6"/>
<line x1="590.00" y1="113.90" x2="618.80" y2="113.90" stroke="#ae3a38" stroke-width="0.8" opacity="0.6"/>
<line x1="513.20" y1="113.20" x2="726.00" y2="113.20" stroke="#27542c" stroke-width="1.15" />
<line x1="725.50" y1="113.20" x2="734.00" y2="113.20" stroke="#a83434" stroke-width="1.1" />
<line x1="494.00" y1="123.50" x2="561.20" y2="123.50" stroke="#ae3a38" stroke-width="0.8" opacity="0.6"/>
<line x1="590.00" y1="123.50" x2="618.80" y2="123.50" stroke="#ae3a38" stroke-width="0.8" opacity="0.6"/>
<line x1="513.20" y1="122.80" x2="726.00" y2="122.80" stroke="#27542c" stroke-width="1.15" />
<line x1="725.50" y1="122.80" x2="734.00" y2="122.80" stroke="#a83434" stroke-width="1.1" />
<line x1="494.00" y1="133.10" x2="561.20" y2="133.10" stroke="#ae3a38" stroke-width="0.8" opacity="0.6"/>
<line x1="590.00" y1="133.10" x2="618.80" y2="133.10" stroke="#ae3a38" stroke-width="0.8" opacity="0.6"/>
<line x1="513.20" y1="132.40" x2="726.00" y2="132.40" stroke="#27542c" stroke-width="1.15" />
<line x1="725.50" y1="132.40" x2="734.00" y2="132.40" stroke="#a83434" stroke-width="1.1" />
<line x1="494.00" y1="142.70" x2="561.20" y2="142.70" stroke="#ae3a38" stroke-width="0.8" opacity="0.6"/>
<line x1="590.00" y1="142.70" x2="618.80" y2="142.70" stroke="#ae3a38" stroke-width="0.8" opacity="0.6"/>
<line x1="513.20" y1="142.00" x2="726.00" y2="142.00" stroke="#27542c" stroke-width="1.15" />
<line x1="725.50" y1="142.00" x2="734.00" y2="142.00" stroke="#a83434" stroke-width="1.1" />
<line x1="494.00" y1="152.30" x2="561.20" y2="152.30" stroke="#ae3a38" stroke-width="0.8" opacity="0.6"/>
<line x1="590.00" y1="152.30" x2="618.80" y2="152.30" stroke="#ae3a38" stroke-width="0.8" opacity="0.6"/>
<line x1="513.20" y1="151.60" x2="726.00" y2="151.60" stroke="#27542c" stroke-width="1.15" />
<line x1="725.50" y1="151.60" x2="734.00" y2="151.60" stroke="#a83434" stroke-width="1.1" />
<clipPath id="r1c"><rect x="560" y="80" width="20" height="10.4"/></clipPath>
<clipPath id="r3c"><rect x="560" y="90" width="20" height="10"/></clipPath>
<text x="561.50" y="96.40" font-size="12.2" fill="#444" text-anchor="start" font-weight="normal" textLength="14" lengthAdjust="spacingAndGlyphs" clip-path="url(#r1c)">R1</text>
<text x="561.50" y="106.00" font-size="12.2" fill="#444" text-anchor="start" font-weight="normal" textLength="14" lengthAdjust="spacingAndGlyphs" clip-path="url(#r3c)">R3</text>
<text x="561.50" y="87.80" font-size="12.2" fill="#333" text-anchor="start" font-weight="normal" textLength="14" lengthAdjust="spacingAndGlyphs">R2</text>
<rect x="561.2" y="90.30" width="28.80" height="7.4" fill="#c7c8aa" stroke="#943230" stroke-width="1"/>
<rect x="561.2" y="99.90" width="28.80" height="7.4" fill="#c7c8aa" stroke="#943230" stroke-width="1"/>
<rect x="561.2" y="109.50" width="28.80" height="7.4" fill="#c7c8aa" stroke="#943230" stroke-width="1"/>
<rect x="561.2" y="119.10" width="28.80" height="7.4" fill="#c7c8aa" stroke="#943230" stroke-width="1"/>
<rect x="561.2" y="128.70" width="28.80" height="7.4" fill="#c7c8aa" stroke="#943230" stroke-width="1"/>
<rect x="561.2" y="138.30" width="28.80" height="7.4" fill="#c7c8aa" stroke="#943230" stroke-width="1"/>
<rect x="561.2" y="147.90" width="28.80" height="7.4" fill="#c7c8aa" stroke="#943230" stroke-width="1"/>
<text x="561.50" y="115.60" font-size="12.2" fill="#3a3a3a" text-anchor="start" font-weight="normal" textLength="14" lengthAdjust="spacingAndGlyphs">R4</text>
<text x="561.50" y="125.20" font-size="12.2" fill="#3a3a3a" text-anchor="start" font-weight="normal" textLength="14" lengthAdjust="spacingAndGlyphs">R5</text>
<text x="561.50" y="134.80" font-size="12.2" fill="#3a3a3a" text-anchor="start" font-weight="normal" textLength="14" lengthAdjust="spacingAndGlyphs">R6</text>
<text x="561.50" y="144.40" font-size="12.2" fill="#3a3a3a" text-anchor="start" font-weight="normal" textLength="14" lengthAdjust="spacingAndGlyphs">R7</text>
<text x="561.50" y="106.80" font-size="7.4" fill="#222" text-anchor="start" font-weight="bold" >180R</text>
<text x="561.50" y="163.60" font-size="7.4" fill="#222" text-anchor="start" font-weight="bold" >180R</text>
<text x="578.00" y="163.60" font-size="7.4" fill="#a0a19a" text-anchor="start" font-weight="normal" >XT&gt;</text>
<text x="561.50" y="173.40" font-size="8.0" fill="#a0a19a" text-anchor="start" font-weight="normal" textLength="28.6" lengthAdjust="spacingAndGlyphs">&lt;TEXT&gt;</text>
<rect x="733.5" y="84.0" width="63.30" height="92.00" fill="#4c0607"/>
<polygon points="750.2,96.8 753.9,93.1 779.8,93.1 783.4,96.8 779.8,100.5 753.9,100.5" fill="#1b611d"/>
<polygon points="748.9,129.9 752.5,126.2 778.5,126.2 782.1,129.9 778.5,133.6 752.5,133.6" fill="#1b611d"/>
<polygon points="747.6,162.8 751.3,159.2 777.2,159.2 780.8,162.8 777.2,166.5 751.3,166.5" fill="#1b611d"/>
<polygon points="749.7,97.1 753.3,100.8 752.1,125.9 748.4,129.6 744.8,125.9 746.0,100.8" fill="#1b611d"/>
<polygon points="748.4,130.2 752.0,133.9 750.8,158.8 747.1,162.5 743.5,158.8 744.7,133.9" fill="#1b611d"/>
<polygon points="783.9,97.1 787.5,100.8 786.3,125.9 782.6,129.6 779.0,125.9 780.2,100.8" fill="#1b611d"/>
<polygon points="782.6,130.2 786.2,133.9 785.0,158.8 781.3,162.5 777.7,158.8 778.9,133.9" fill="#1b611d"/>
<polyline points="791.6,175.6 791.6,324.4 695.6,324.4 695.6,362.8" fill="none" stroke="#27542c" stroke-width="1.2"/>
<polyline points="340.4,266.8 292.4,266.8 292.4,391.6 666.8,391.6" fill="none" stroke="#27542c" stroke-width="1.2"/>
<line x1="657.20" y1="391.60" x2="676.00" y2="391.60" stroke="#9a3a34" stroke-width="1.0" />
<rect x="676.0" y="377.80" width="5.0" height="27.6" fill="#d0b49c" stroke="#9a3a34" stroke-width="1"/>
<polyline points="681.0,385.10 695.6,372.4" fill="none" stroke="#9a3a34" stroke-width="1.05"/>
<line x1="695.60" y1="362.80" x2="695.60" y2="372.40" stroke="#27542c" stroke-width="1.1" />
<polyline points="681.0,398.10 695.6,410.8" fill="none" stroke="#9a3a34" stroke-width="1.05"/>
<polygon points="695.6,410.40 687.20,407.40 691.80,402.20" fill="#dcc4b0" stroke="#9a3a34" stroke-width="0.9"/>
<line x1="695.60" y1="410.30" x2="695.60" y2="458.80" stroke="#27542c" stroke-width="1.1" />
<line x1="685.60" y1="458.50" x2="704.60" y2="458.50" stroke="#27542c" stroke-width="1.2" />
<line x1="689.00" y1="463.40" x2="701.00" y2="463.40" stroke="#27542c" stroke-width="1.0" opacity="0.85"/>
<line x1="693.00" y1="468.00" x2="697.60" y2="468.00" stroke="#27542c" stroke-width="1.0" opacity="0.8"/>
<text x="700.80" y="383.00" font-size="12.2" fill="#333" text-anchor="start" font-weight="normal" textLength="15" lengthAdjust="spacingAndGlyphs">Q1</text>
<text x="701.00" y="393.40" font-size="7.4" fill="#1c1c1c" text-anchor="start" font-weight="bold" letter-spacing="0.3">NPN</text>
<text x="700.80" y="403.00" font-size="8.0" fill="#a0a19a" text-anchor="start" font-weight="normal" textLength="28.6" lengthAdjust="spacingAndGlyphs">&lt;TEXT&gt;</text>
<g stroke="#22229a" stroke-width="1.15" fill="none"><line x1="709.1" y1="228.3" x2="719.9" y2="228.3"/><line x1="714.5" y1="222.9" x2="714.5" y2="233.70000000000002"/><circle cx="714.5" cy="228.3" r="3"/></g>
</g>
<g>

<rect x="55.3" y="63.2" width="80.2" height="66.9" fill="none" stroke="#3c3cb4" stroke-width="1.35"/>
<rect x="48.3" y="80.8" width="72.2" height="45.2" fill="none" stroke="#3cc03c" stroke-width="1.1"/>
<rect x="66" y="82.8" width="11.4" height="25.6" fill="#d6d7ca" stroke="#4a4a44" stroke-width="1.2"/>
<rect x="78.4" y="84.2" width="19" height="5.8" fill="#1a1a1a"/>
<rect x="81.2" y="83.4" width="1.6" height="8" fill="#d8d8cc"/>
<rect x="84.5" y="84" width="1.2" height="7" fill="#d8d8cc" opacity="0.7"/>
<rect x="97.2" y="82.6" width="5.2" height="10" fill="#222" stroke="#111" stroke-width="0.8"/>
<rect x="98.8" y="84.6" width="2.2" height="5.2" fill="#bbb"/>
<polyline points="102.8,92 102.8,105.4 94.2,105.4 94.2,110" fill="none" stroke="#333" stroke-width="1"/>
<polyline points="66,100.3 60.6,100.3 60.6,113 92.6,113" fill="none" stroke="#333" stroke-width="1"/>
<rect x="92.4" y="110.6" width="1.8" height="5" fill="#111"/>
<line x1="94.2" y1="115" x2="94.2" y2="120.8" stroke="#222" stroke-width="1.4"/>

</g>
</svg>
</div></body></html>
